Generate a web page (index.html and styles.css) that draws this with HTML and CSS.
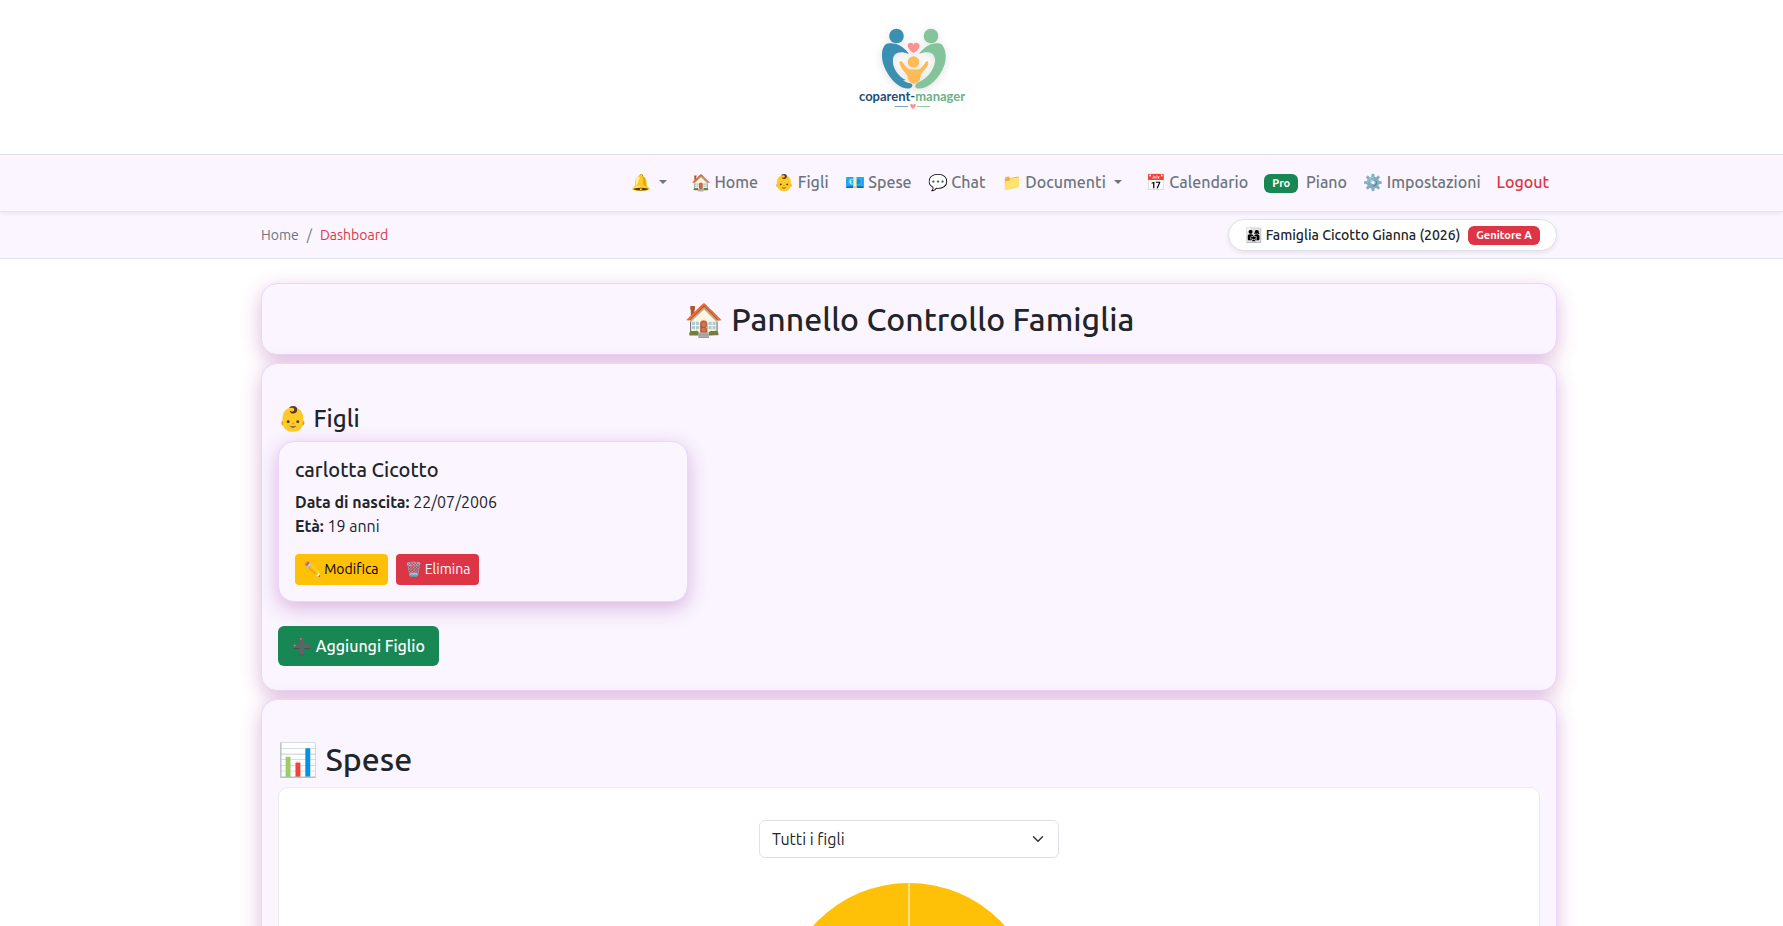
FILE: index.html
```
<!DOCTYPE html>
<html lang="it">

<head>
    <meta charset="UTF-8">
    <meta name="viewport" content="width=device-width, initial-scale=1">
    <title>Dashboard - coparent-manager</title>
    <link rel="stylesheet" href="styles.css">
</head>

<body>
    <header class="site-header">
        <a class="logo" href="#" aria-label="coparent-manager">
            <svg width="122" height="98" viewBox="0 0 122 98">
                <g class="logo-mark">
                    <!-- genitore sinistro -->
                    <g fill="#3b8fb0">
                        <circle cx="48.500" cy="14" r="7.300" />
                        <path d="M38 22C33 26 33 36 36 44C40 55 50 66 59 66.500C64 67 66 63 63 61.500C60 61 58 60 55 58.500L58 58C51 55 45 47 45 40C44 31 51 28 61 32C57 26 51 22 45 21.500C42 21 40 21 38 22Z" />
                    </g>
                    <!-- genitore destro -->
                    <g fill="#84c49a">
                        <circle cx="83" cy="14" r="7.300" />
                        <path d="M93 22C98 26 99 36 96 44C92 55 82 66 72 66.500C67 67 66 64 69 61C79 57 86 48 87 40C88 31 81 28 71 32C75 26 81 22 87 21.500C90 21 92 21 93 22Z" />
                    </g>
                    <!-- figlio -->
                    <g fill="#fdbb55">
                        <circle cx="65.500" cy="40" r="5.800" />
                        <path d="M51.500 39.500C53 38.500 55 40 56 42C58 45 60 47 62 47.500H70C73 47 75 44 77 41C78 39 79 39 80 39.500C81 41 80 43 78 46C76 49 73 51 72.500 54C72 57 72 59 70 60L66 62L62 60C60 58 60 57 59.500 54C58 51 55 49 53 45C52 43 51 41 51.500 39.500Z" />
                    </g>
                    <path fill="#fb9190" d="M65.500 31C58 26 59 21.500 62 21C64 20.500 65 21.500 65.500 23C66 21.500 67 20.500 69 21C72 21.500 74 26 65.500 31Z" />
                </g>
                <text x="11" y="79" class="logo-text" fill="#1f4e79">coparent-<tspan fill="#6ab187">manager</tspan></text>
                <path d="M47 84.500H60" stroke="#7ba2b8" />
                <path d="M69 84.500H82" stroke="#93c7a6" />
                <path fill="#fb9190" d="M65 87C61 84 62 82 63.500 82C64.500 82 65 83 65 83C65 83 65.500 82 66.500 82C68 82 69 84 65 87Z" />
            </svg>
        </a>
    </header>

    <nav class="navbar">
        <div class="container">
            <ul class="nav-list">
                <li class="dropdown"><a class="nav-link" href="#" aria-label="Notifiche">🔔 <span class="caret"></span></a></li>
                <li><a class="nav-link" href="#">🏠 Home</a></li>
                <li><a class="nav-link" href="#">👶 Figli</a></li>
                <li><a class="nav-link" href="#">💶 Spese</a></li>
                <li><a class="nav-link" href="#">💬 Chat</a></li>
                <li class="dropdown"><a class="nav-link" href="#">📁 Documenti <span class="caret"></span></a></li>
                <li><a class="nav-link" href="#">📅 Calendario</a></li>
                <li><a class="nav-link" href="#"><span class="badge badge-green">Pro</span> Piano</a></li>
                <li><a class="nav-link" href="#">⚙️ Impostazioni</a></li>
                <li><a class="nav-link logout" href="#">Logout</a></li>
            </ul>
        </div>
    </nav>

    <div class="subbar">
        <div class="container">
            <nav class="breadcrumb" aria-label="breadcrumb">
                <a href="#">Home</a>
                <span class="sep">/</span>
                <span class="active">Dashboard</span>
            </nav>
            <div class="family">
                <span>👨‍👩‍👧 Famiglia Cicotto Gianna (2026)</span>
                <span class="badge badge-red">Genitore A</span>
            </div>
        </div>
    </div>

    <main class="main">
        <div class="container">
            <section class="card">
                <h1 class="page-title">🏠 Pannello Controllo Famiglia</h1>
            </section>

            <section class="card section">
                <h2 class="title-small">👶 Figli</h2>
                <div class="children">
                    <div class="card">
                        <h3 class="child-name">carlotta Cicotto</h3>
                        <p class="child-data">
                            <strong>Data di nascita:</strong> 22/07/2006<br>
                            <strong>Età:</strong> 19 anni
                        </p>
                        <div class="actions">
                            <button type="button" class="btn btn-sm btn-yellow">✏️ Modifica</button>
                            <button type="button" class="btn btn-sm btn-red">🗑️ Elimina</button>
                        </div>
                    </div>
                </div>
                <button type="button" class="btn btn-green">➕ Aggiungi Figlio</button>
            </section>

            <section class="card section">
                <h2 class="title-big">📊 Spese</h2>
                <div class="chart-box">
                    <select class="select" aria-label="Figlio">
                        <option>Tutti i figli</option>
                    </select>
                    <svg class="pie" width="260" height="260" viewBox="0 0 260 260">
                        <circle cx="130" cy="130" r="129" fill="#ffc107" />
                        <path d="M130 1V130" stroke="#ffe083" stroke-width="2" />
                    </svg>
                </div>
            </section>
        </div>
    </main>
</body>

</html>
```

FILE: styles.css
```
* {
    margin: 0;
    padding: 0;
    box-sizing: border-box;
}

body {
    font-family: Ubuntu, "Noto Sans", "Liberation Sans", sans-serif;
    font-size: 16px;
    line-height: 24px;
    color: #212529;
    background-color: #fff;
}

a {
    text-decoration: none;
}

.site-header,
.navbar,
.subbar,
.main {
    padding-left: 35px;
}

.container {
    max-width: 1296px;
    margin: 0 auto;
}

.site-header {
    display: flex;
    justify-content: center;
    padding-top: 22px;
    padding-bottom: 34px;
    border-bottom: 1px solid #dee2e6;
}

.logo svg {
    display: block;
}

.logo-mark {
    filter: drop-shadow(0 2px 4px rgba(0, 0, 0, 0.12));
}

.logo-text {
    font-family: Lato, sans-serif;
    font-size: 13px;
    font-weight: bold;
}

.navbar {
    position: relative;
    padding-top: 8px;
    padding-bottom: 8px;
    background-color: #faf5ff;
    border-bottom: 1px solid #e9e3f0;
    box-shadow: 0 2px 4px rgba(0, 0, 0, 0.06);
}

.nav-list {
    display: flex;
    justify-content: flex-end;
    list-style: none;
}

.nav-link {
    display: block;
    padding: 7px 8px 9px;
    font-weight: 500;
    color: #6c757d;
    white-space: nowrap;
}

.nav-link.logout {
    color: #dc3545;
}

.dropdown {
    margin-right: 8px;
}

.caret {
    display: inline-block;
    margin-left: 4px;
    vertical-align: 4px;
    border-top: 4px solid;
    border-left: 4px solid transparent;
    border-right: 4px solid transparent;
}

.badge {
    display: inline-block;
    padding: 4px 8px;
    border-radius: 6px;
    font-size: 11px;
    line-height: 11px;
    font-weight: bold;
    color: #fff;
    vertical-align: middle;
}

.badge-green {
    margin-right: 4px;
    background-color: #198754;
}

.badge-red {
    background-color: #dc3545;
}

.subbar {
    background-color: #faf5ff;
    border-bottom: 1px solid #dee2e6;
}

.subbar .container {
    display: flex;
    align-items: center;
    justify-content: space-between;
    height: 46px;
}

.breadcrumb {
    display: flex;
    gap: 8px;
    font-size: 14px;
}

.breadcrumb a,
.sep {
    color: #6c757d;
}

.breadcrumb .active {
    color: #dc3545;
}

.family {
    display: flex;
    align-items: center;
    gap: 8px;
    padding: 3px 16px;
    border: 1px solid #dee2e6;
    border-radius: 16px;
    background-color: #fff;
    box-shadow: 0 2px 4px rgba(0, 0, 0, 0.08);
    font-size: 14px;
    font-weight: 500;
}

.main {
    padding-top: 24px;
    padding-bottom: 24px;
}

.card {
    padding: 16px;
    margin-bottom: 8px;
    border: 1px solid #e9d5ff;
    border-radius: 16px;
    background-color: #faf5ff;
    box-shadow: 0 6px 20px rgba(150, 30, 140, 0.3);
}

.section {
    padding-top: 40px;
    padding-bottom: 24px;
}

h1,
h2,
h3 {
    font-weight: 500;
}

.page-title,
.title-big {
    font-size: 32px;
    line-height: 38px;
}

.page-title {
    text-align: center;
}

.title-small {
    font-size: 24px;
    line-height: 29px;
}

.title-small {
    margin-bottom: 8px;
}

.title-big {
    margin-bottom: 9px;
}

.children {
    display: grid;
    grid-template-columns: repeat(3, 1fr);
    gap: 16px;
    margin-bottom: 24px;
}

.children .card {
    margin-bottom: 0;
}

.child-name {
    margin-bottom: 8px;
    font-size: 20px;
    line-height: 24px;
}

.child-data {
    margin-bottom: 16px;
}

.actions {
    display: flex;
    gap: 8px;
}

.btn {
    padding: 8px 14px;
    border: 0;
    border-radius: 6px;
    font-family: inherit;
    font-size: 16px;
    line-height: 24px;
    font-weight: 500;
    color: #fff;
    cursor: pointer;
}

.btn-sm {
    padding: 5px 9px;
    border-radius: 4px;
    font-size: 14px;
    line-height: 21px;
    font-weight: normal;
}

.btn-yellow {
    background-color: #ffc107;
    color: #000;
}

.btn-red {
    background-color: #dc3545;
}

.btn-green {
    background-color: #198754;
}

.chart-box {
    padding: 32px;
    border: 1px solid #e9ecef;
    border-radius: 10px;
    background-color: #fff;
}

.select {
    display: block;
    width: 300px;
    height: 38px;
    margin: 0 auto 24px;
    padding: 0 12px;
    border: 1px solid #dee2e6;
    border-radius: 6px;
    appearance: none;
    background: #fff url("data:image/svg+xml,%3csvg xmlns='http://www.w3.org/2000/svg' viewBox='0 0 16 16'%3e%3cpath fill='none' stroke='%23343a40' stroke-linecap='round' stroke-linejoin='round' stroke-width='2' d='m2 5 6 6 6-6'/%3e%3c/svg%3e") no-repeat right 14px center / 12px 12px;
    font-family: inherit;
    font-size: 16px;
    color: #212529;
}

.pie {
    display: block;
    margin: 0 auto;
}
```
